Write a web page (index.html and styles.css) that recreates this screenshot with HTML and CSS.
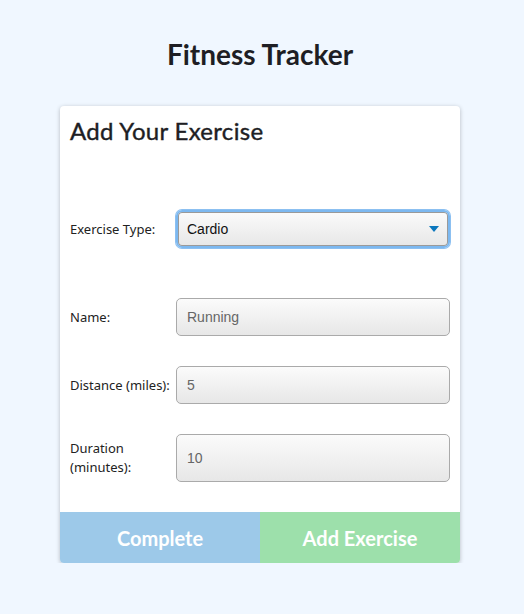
FILE: index.html
```html
<!DOCTYPE html>
<html>
<head>
<meta charset="utf-8">
<link rel="stylesheet" href="styles.css">
</head>
<body>
<h1 class="title">Fitness Tracker</h1>
<div class="card">
  <h2 class="card-title">Add Your Exercise</h2>
  <form class="form">
    <div class="row row-first">
      <label class="label">Exercise Type:</label>
      <div class="select">
        <span>Cardio</span>
        <svg class="arrow" width="10" height="6" viewBox="0 0 10 6"><path d="M0 0H10L5 6Z" fill="#0b77bd"/></svg>
      </div>
    </div>
    <div class="row">
      <label class="label">Name:</label>
      <div class="input">Running</div>
    </div>
    <div class="row">
      <label class="label">Distance (miles):</label>
      <div class="input">5</div>
    </div>
    <div class="row">
      <label class="label">Duration<br>(minutes):</label>
      <div class="input input-tall">10</div>
    </div>
  </form>
  <div class="buttons">
    <button class="btn btn-complete" type="button">Complete</button>
    <button class="btn btn-add" type="button">Add Exercise</button>
  </div>
</div>
</body>
</html>
```
FILE: styles.css
```css
html, body {
  margin: 0;
  padding: 0;
}
body {
  background: #f0f7ff;
  font-family: Lato, "Liberation Sans", sans-serif;
  color: #222;
  padding: 36px 4px 0 0;
}
.title {
  margin: 0;
  text-align: center;
  font-size: 28px;
  font-weight: 700;
  line-height: 36px;
  color: #1e1e24;
}
.card {
  width: 400px;
  margin: 34px auto 0;
  background: #fff;
  border-radius: 4px;
  box-shadow: 0 1px 4px rgba(0,0,0,0.25);
  overflow: hidden;
}
.card-title {
  margin: 0;
  padding: 10px 10px 0;
  font-size: 24px;
  font-weight: 400;
  line-height: 30px;
  letter-spacing: 0.3px;
  color: #1e1e24;
  -webkit-text-stroke: 0.4px #1e1e24;
}
.form {
  padding: 64px 10px 30px;
  display: flex;
  flex-direction: column;
  gap: 30px;
}
.row {
  display: flex;
  align-items: center;
}
.row-first {
  margin-bottom: 20px;
}
.label {
  width: 106px;
  flex: none;
  font-family: "Noto Sans", Lato, sans-serif;
  font-size: 13px;
  line-height: 19px;
  color: #222;
}
.input, .select {
  flex: 1;
  box-sizing: border-box;
  height: 38px;
  border: 1px solid #aaa;
  border-radius: 5px;
  background: linear-gradient(#fbfbfb, #e7e7e7);
  font-family: "Liberation Sans", Arial, sans-serif;
  font-size: 14px;
  color: #666;
  display: flex;
  align-items: center;
  padding: 0 10px;
}
.input-tall {
  height: 48px;
}
.select {
  color: #111;
  justify-content: space-between;
  border: 2px solid #7cb8f0;
  border-radius: 6px;
  box-shadow: 0 0 0 1px #8cc0f1, inset 0 0 0 1px #9a9a9a;
  padding: 0 9px;
}
.buttons {
  display: flex;
}
.btn {
  flex: 1;
  height: 51px;
  border: none;
  margin: 0;
  font-family: Lato, sans-serif;
  font-size: 20px;
  font-weight: 700;
  color: #fff;
}
.btn-complete {
  background: #9dc9e9;
}
.btn-add {
  background: #9de0ab;
}
```
